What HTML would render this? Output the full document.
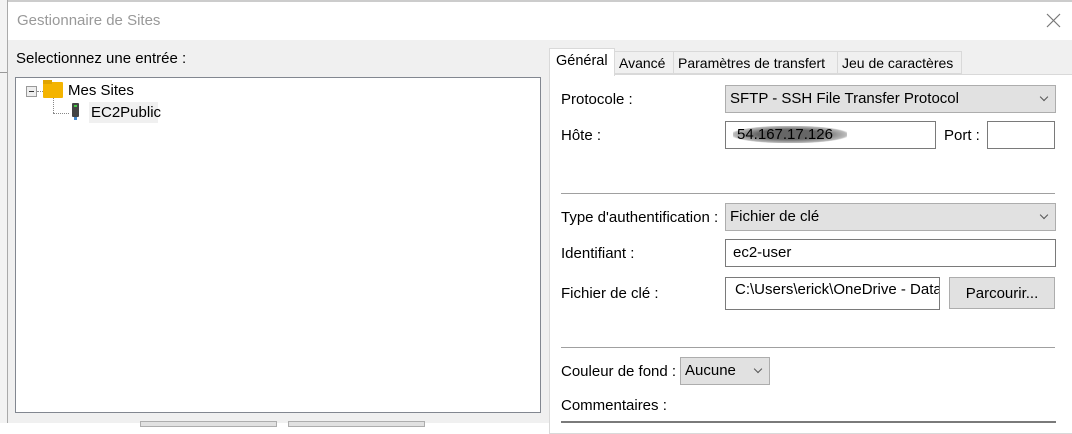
<!DOCTYPE html><html><head><style>
body{margin:0;width:1072px;height:423px;overflow:hidden;position:relative;background:#fff;font-family:"Liberation Sans",sans-serif;font-size:15px;color:#000}
.a{position:absolute;white-space:nowrap}
.inp{position:absolute;background:#fff;border:1px solid #7a7a7a;box-sizing:border-box;padding-left:7px;line-height:25px;white-space:nowrap}
.cb{position:absolute;background:#e1e1e1;border:1px solid #adadad;box-sizing:border-box;padding-left:4px;line-height:25px}
.cb:after{content:"";position:absolute;right:8px;top:8px;width:5px;height:5px;border-right:1px solid #555;border-bottom:1px solid #555;transform:rotate(45deg)}
.tab{position:absolute;top:51px;height:23px;background:#f0f0f0;border:1px solid #d9d9d9;box-sizing:border-box;line-height:22px;padding:0 4px;font-size:14px;white-space:nowrap;overflow:hidden}
</style></head><body>
<div class="a" style="left:0;top:0;width:7px;height:423px;background:#f3f3f3;border-right:1px solid #aaa"></div>
<div class="a" style="left:0;top:72px;width:7px;height:1px;background:#999"></div>
<div class="a" style="left:8px;top:0;width:1064px;height:40px;background:#fff;border-top:2px solid #ccc;box-sizing:border-box"></div>
<div class="a" style="left:17px;top:12px;color:#999;font-size:15px">Gestionnaire de Sites</div>
<svg class="a" style="left:1046px;top:13px" width="15" height="15"><path d="M1 1L14 14M14 1L1 14" stroke="#777" stroke-width="1.2"/></svg>
<div class="a" style="left:8px;top:40px;width:1064px;height:383px;background:#f0f0f0"></div>
<div class="a" style="left:16px;top:50px">Selectionnez une entrée :</div>
<div class="a" style="left:15px;top:77px;width:526px;height:336px;background:#fff;border:1px solid #828790;box-sizing:border-box"></div>
<div class="a" style="left:26px;top:86px;width:9px;height:9px;border:1px solid #999;background:#eee"><div class="a" style="left:2px;top:4px;width:5px;height:1px;background:#333"></div></div>
<div class="a" style="left:37px;top:91px;width:6px;border-top:1px dotted #888"></div>
<div class="a" style="left:53px;top:97px;height:16px;border-left:1px dotted #888"></div>
<div class="a" style="left:53px;top:113px;width:16px;border-top:1px dotted #888"></div>
<div class="a" style="left:43px;top:82px;width:20px;height:16px;background:#f4b400;border-radius:1px"></div>
<div class="a" style="left:43px;top:80px;width:9px;height:4px;background:#e0a400"></div>
<div class="a" style="left:68px;top:82px">Mes Sites</div>
<div class="a" style="left:72px;top:103px;width:7px;height:14px;background:#444;border-radius:1px"><div class="a" style="left:2px;top:2px;width:3px;height:2px;background:#4c4"></div></div>
<div class="a" style="left:74px;top:117px;width:3px;height:3px;background:#48c"></div>
<div class="a" style="left:89px;top:102px;width:69px;height:21px;background:#f0f0f0"></div>
<div class="a" style="left:91px;top:104px">EC2Public</div>
<div class="a" style="left:140px;top:421px;width:135px;height:4px;background:#e1e1e1;border:1px solid #adadad"></div>
<div class="a" style="left:288px;top:421px;width:135px;height:4px;background:#e1e1e1;border:1px solid #adadad"></div>
<div class="a" style="left:549px;top:74px;width:530px;height:360px;background:#fff;border:1px solid #d9d9d9;box-sizing:border-box"></div>
<div class="tab" style="left:614px;width:60px">Avancé</div>
<div class="tab" style="left:673px;width:165px">Paramètres de transfert</div>
<div class="tab" style="left:837px;width:125px">Jeu de caractères</div>
<div class="a" style="left:549px;top:48px;width:66px;height:28px;background:#fff;border:1px solid #d9d9d9;border-bottom:none;box-sizing:border-box;line-height:24px;padding-left:6px;font-size:14.5px">Général</div>
<div class="a" style="left:561px;top:91px">Protocole :</div>
<div class="cb" style="left:725px;top:85px;width:331px;height:28px">SFTP - SSH File Transfer Protocol</div>
<div class="a" style="left:561px;top:127px">Hôte :</div>
<div class="inp" style="left:725px;top:121px;width:211px;height:28px"><span style="background:radial-gradient(ellipse,#666 40%,#bbb 70%,transparent 75%);padding:0 14px 0 4px">54.167.17.126</span></div>
<div class="a" style="left:944px;top:127px">Port :</div>
<div class="inp" style="left:987px;top:121px;width:68px;height:28px"></div>
<div class="a" style="left:561px;top:193px;width:494px;height:1px;background:#a0a0a0"></div>
<div class="a" style="left:561px;top:209px">Type d'authentification :</div>
<div class="cb" style="left:725px;top:203px;width:331px;height:28px">Fichier de clé</div>
<div class="a" style="left:561px;top:245px">Identifiant :</div>
<div class="inp" style="left:725px;top:239px;width:331px;height:28px">ec2-user</div>
<div class="a" style="left:561px;top:285px">Fichier de clé :</div>
<div class="inp" style="left:725px;top:277px;width:215px;height:33px;line-height:23px;overflow:hidden;padding-left:9px">C:\Users\erick\OneDrive - Data</div>
<div class="a" style="left:949px;top:277px;width:106px;height:32px;background:#e1e1e1;border:1px solid #adadad;box-sizing:border-box;text-align:center;line-height:32px">Parcourir...</div>
<div class="a" style="left:561px;top:347px;width:494px;height:1px;background:#a0a0a0"></div>
<div class="a" style="left:561px;top:363px">Couleur de fond :</div>
<div class="cb" style="left:680px;top:357px;width:90px;height:28px">Aucune</div>
<div class="a" style="left:561px;top:397px">Commentaires :</div>
<div class="a" style="left:561px;top:421px;width:495px;height:2px;background:#7a7a7a"></div>
</body></html>
